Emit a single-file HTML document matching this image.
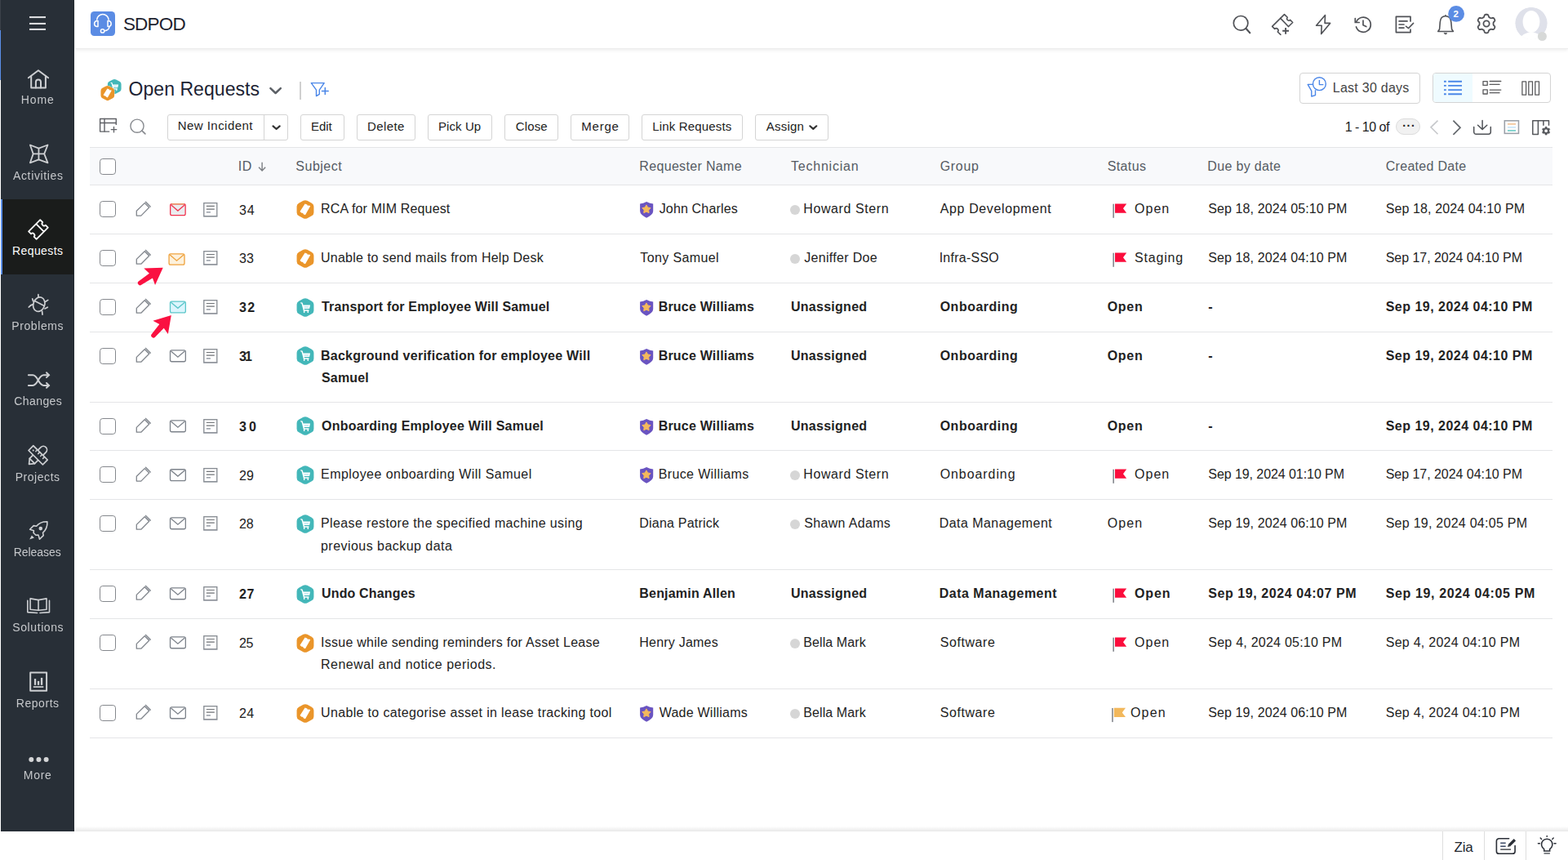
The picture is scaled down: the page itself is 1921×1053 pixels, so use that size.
<!DOCTYPE html>
<html lang="en"><head><meta charset="utf-8"><title>SDPOD - Open Requests</title>
<style>
html,body{margin:0;padding:0;}
body{width:1921px;height:1053px;overflow:hidden;background:#fff;position:relative;font-family:"Liberation Sans",sans-serif;color:#222;}
.a,.t,svg{position:absolute;}
.t{white-space:pre;line-height:20px;}
.g{will-change:opacity;}
svg{overflow:visible;}
.btn{position:absolute;box-sizing:border-box;border:1px solid #d4d4d4;border-radius:3px;background:#fff;height:32px;top:140px;}
.hl{position:absolute;left:110px;width:1792px;height:1px;background:#e4e5e7;}
.cb{position:absolute;left:122.2px;width:19.6px;height:19.6px;box-sizing:border-box;border:1.3px solid #85888d;border-radius:3.8px;background:#fff;}
.dot{position:absolute;left:968px;width:12px;height:12px;border-radius:50%;background:#d6d6d6;}
</style></head>
<body>
<div class="a" style="left:0;top:0;width:1px;height:37px;background:#3b4149"></div>
<div class="a" style="left:0;top:37px;width:1px;height:61px;background:#5b8fe8"></div>
<div class="a" id="side" style="left:1px;top:0;width:90px;height:1018px;background:#282f37;box-sizing:border-box;border-right:1px solid #222930"></div>
<div class="a" style="left:1px;top:244px;width:89px;height:92px;background:#1a1c1b"></div>
<div class="a" style="left:1px;top:244px;width:2px;height:92px;background:#5b8fe8"></div>
<div class="a" id="top" style="left:92px;top:0;width:1829px;height:59px;background:#fff;box-shadow:0 1px 0 #ededed,0 2px 5px rgba(0,0,0,0.09)"></div>
<div class="a" id="foot" style="left:0;top:1018px;width:1921px;height:35px;background:#fff"></div>
<div class="a" style="left:91px;top:1012px;width:1830px;height:6px;background:linear-gradient(to bottom,rgba(0,0,0,0),rgba(0,0,0,0.09))"></div>
<div class="a" style="left:1767px;top:1018px;width:1px;height:35px;background:#dedede"></div>
<div class="a" style="left:1818px;top:1018px;width:1px;height:35px;background:#dedede"></div>
<div class="a" style="left:1869px;top:1018px;width:1px;height:35px;background:#dedede"></div>
<div class="a" style="left:367.1px;top:100.1px;width:1.8px;height:21.7px;background:#d0d0d0"></div>
<div class="btn" style="left:205px;width:148px"></div>
<div class="a" style="left:323px;top:141px;width:1px;height:30px;background:#d4d4d4"></div>
<div class="btn" style="left:368px;width:54px"></div>
<div class="btn" style="left:437px;width:72px"></div>
<div class="btn" style="left:524px;width:79px"></div>
<div class="btn" style="left:618px;width:66px"></div>
<div class="btn" style="left:699px;width:72px"></div>
<div class="btn" style="left:786px;width:124px"></div>
<div class="btn" style="left:925px;width:90px"></div>
<div class="a" style="left:1592px;top:89px;width:148px;height:38px;box-sizing:border-box;border:1px solid #d4d4d4;border-radius:4px;background:#fff"></div>
<div class="a" style="left:1755px;top:89px;width:145px;height:37px;box-sizing:border-box;border:1px solid #d4d4d4;border-radius:4px;background:#fff;overflow:hidden"><div style="position:absolute;left:0;top:0;width:48px;height:35px;background:#effbff"></div></div>
<div class="a" style="left:1710px;top:145px;width:30px;height:20px;box-sizing:border-box;border:1px solid #dcdcdc;border-radius:10px;background:#f1f1f1"></div>
<div class="a" style="left:110px;top:180px;width:1792px;height:47px;box-sizing:border-box;border-top:1px solid #e4e5e7;border-bottom:1px solid #e4e5e7;background:#f8f9fb"></div>
<div class="cb" style="top:194px"></div>
<div class="hl" style="top:286px"></div>
<div class="cb" style="top:246.2px"></div>
<div class="dot" style="top:251px"></div>
<div class="hl" style="top:346px"></div>
<div class="cb" style="top:306.2px"></div>
<div class="dot" style="top:311px"></div>
<div class="hl" style="top:406px"></div>
<div class="cb" style="top:366.2px"></div>
<div class="hl" style="top:492px"></div>
<div class="cb" style="top:426.2px"></div>
<div class="hl" style="top:551px"></div>
<div class="cb" style="top:512.2px"></div>
<div class="hl" style="top:611px"></div>
<div class="cb" style="top:571.2px"></div>
<div class="dot" style="top:576px"></div>
<div class="hl" style="top:697px"></div>
<div class="cb" style="top:631.2px"></div>
<div class="dot" style="top:636px"></div>
<div class="hl" style="top:757px"></div>
<div class="cb" style="top:717.2px"></div>
<div class="hl" style="top:843px"></div>
<div class="cb" style="top:777.2px"></div>
<div class="dot" style="top:782px"></div>
<div class="hl" style="top:903px"></div>
<div class="cb" style="top:863.2px"></div>
<div class="dot" style="top:868px"></div>
<svg style="left:0;top:0" width="1921" height="1053" viewBox="0 0 1921 1053"><g fill="#dcdde0"><rect x="36" y="20" width="20" height="2.1"/><rect x="36" y="27.9" width="20" height="2.1"/><rect x="36" y="34.9" width="20" height="2.1"/></g>
<g fill="none" stroke="#cdcfd2" stroke-width="2" stroke-linecap="round" stroke-linejoin="round" stroke-linejoin="miter" stroke-linecap="butt"><path d="M34.9 95.3 L46.95 86.2 L59.1 95.3" stroke-linecap="round"/><path d="M38.2 93.3 V107.5 H55.9 V93.3"/><path d="M43.9 107.5 V100.6 A3.05 3.05 0 0 1 50 100.6 V107.5"/></g>
<g fill="none" stroke="#cdcfd2" stroke-width="1.8" stroke-linecap="round" stroke-linejoin="round" ><path d="M36.9 177.5 L47.45 181.6 L58.5 177.5 L54.2 188.4 L58.5 199.3 L47.45 195.4 L36.9 199.3 L40.7 188.4 Z"/><path d="M47.45 181.6 V195.4 M40.7 188.4 H54.2"/></g>
<path d="M-10.0 -6.75 H10.0 V-2.5 A2.5 2.5 0 0 0 10.0 2.5 V6.75 H-10.0 V2.5 A2.5 2.5 0 0 0 -10.0 -2.5 Z M2.9 -6.75 V6.75" transform="translate(46.95 281.0) rotate(-45)" fill="none" stroke="#ffffff" stroke-width="1.8" stroke-linejoin="round"/>
<g fill="none" stroke="#cdcfd2" stroke-width="1.7" stroke-linecap="round" stroke-linejoin="round" ><ellipse cx="47.8" cy="372.7" rx="6.9" ry="8.9" transform="rotate(20 47.9 372.7)"/><path d="M42.6 368.6 L54.2 374.4"/><path d="M47.0 364.0 L46.9 360.7"/><path d="M40.6 368.8 L39.7 365.8"/><path d="M40.4 372.6 Q37.5 373.4 35.3 376"/><path d="M55.5 369.5 L58.8 367.4"/><path d="M54.9 377.9 L58.3 376.2"/><path d="M51.6 381.0 L52 385.2"/></g>
<g fill="none" stroke="#cdcfd2" stroke-width="2" stroke-linecap="round" stroke-linejoin="round" ><path d="M34.9 459.2 H40 C47 459.2 46.6 471.9 53.6 471.9 H59.6"/><path d="M34.9 471.9 H40 C47 471.9 46.6 459.2 53.6 459.2 H59.6"/><path d="M57 456.3 L60 459.2 L57 462.1" stroke-linejoin="miter"/><path d="M57 469 L60 471.9 L57 474.8" stroke-linejoin="miter"/></g>
<g fill="none" stroke="#cdcfd2" stroke-width="1.7" stroke-linecap="round" stroke-linejoin="round" stroke-linejoin="miter"><g transform="translate(46.6 557.3) rotate(45)"><path d="M-4.4 -9.2 A4.4 4.4 0 0 1 4.4 -9.2 V10.2 L0 15.6 L-4.4 10.2 Z" transform="translate(0 0)"/><path d="M-4.4 10.2 H4.4"/></g><g transform="translate(46.6 557.3) rotate(-45)"><rect x="-4.1" y="-12.3" width="8.2" height="24.6" fill="#282f37"/><path d="M4.1 -5.2 H1.3 M4.1 -1.1 H1.3 M4.1 3.0 H1.3 M4.1 7.1 H1.3" stroke-width="1.5"/><circle cx="0" cy="-8.3" r="1.0" fill="#cdcfd2" stroke="none"/></g></g>
<g fill="none" stroke="#cdcfd2" stroke-width="1.6" stroke-linecap="round" stroke-linejoin="round" ><path d="M57.9 638.8 C52 638.6 47.5 640.8 44.6 644.3 L41.2 643.6 L36.6 648.2 L41.4 649.7 L41.1 652.5 L43.9 655.3 L47.0 655.1 L48.5 660.3 L53.2 655.6 L52.5 652.4 C56 649.3 58.2 645 57.9 638.8 Z"/><circle cx="49.8" cy="647.1" r="2.3" fill="#cdcfd2" stroke="none"/><path d="M38.9 655.4 L41.9 658.6 L36.2 660.5 Z" fill="#cdcfd2" stroke="none"/></g>
<g fill="none" stroke="#cdcfd2" stroke-width="1.6" stroke-linecap="round" stroke-linejoin="round" stroke-linejoin="miter" stroke-linecap="butt"><path d="M37.1 732.9 L47.05 734.6 L57.0 732.9 V746.2 L47.05 747.2 L37.1 746.2 Z"/><path d="M47.05 734.6 V747.2"/><path d="M33.8 735.4 V749.6 L45.6 750.5"/><path d="M60.5 735.4 V749.6 L49 750.5"/></g>
<g fill="none" stroke="#cdcfd2" stroke-width="2" stroke-linecap="round" stroke-linejoin="round" stroke-linejoin="miter"><rect x="37.2" y="823.4" width="19.9" height="22.4"/></g>
<g fill="#cdcfd2"><rect x="41.9" y="831.1" width="2.3" height="7.7"/><rect x="45.9" y="833.9" width="2.3" height="4.9"/><rect x="49.9" y="829.9" width="2.3" height="8.9"/><rect x="40.8" y="840.2" width="12.5" height="1.7"/></g>
<g fill="#d4d5d7"><circle cx="38.3" cy="929.9" r="3"/><circle cx="47.45" cy="929.9" r="3"/><circle cx="56.6" cy="929.9" r="3"/></g>
<rect x="111" y="14" width="30" height="30" rx="4.5" fill="#5b8ce4"/>
<g fill="none" stroke="#ffffff" stroke-width="1.5" stroke-linecap="round" stroke-linejoin="round" ><path d="M118.7 24.0 A7.25 7.25 0 0 1 133.1 24.0"/><path d="M120.0 25.5 V32.6 H118.6 A3.6 3.6 0 0 1 118.6 25.5 Z" stroke-linejoin="round"/><path d="M132.0 25.5 V32.6 H133.2 A3.6 3.6 0 0 0 133.2 25.5 Z"/><path d="M134.0 32.8 C133.6 35.4 131.2 37.4 128.0 37.8"/><circle cx="125.6" cy="37.9" r="2.2"/></g>
<g fill="none" stroke="#505257" stroke-width="1.7" stroke-linecap="round" stroke-linejoin="round" ><circle cx="1520.1" cy="28.3" r="8.8"/><path d="M1526.4 34.8 L1531.3 40.3" stroke-width="2.1"/></g>
<g fill="none" stroke="#505257" stroke-width="1.6" stroke-linecap="round" stroke-linejoin="round" stroke-linejoin="miter"><path d="M1578.5 32.5 L1583.7 27.5 L1580.6 24.4 A2.1 2.1 0 0 1 1577.3 21.3 L1573.5 17.6 L1558.6 32.4 L1561.6 35.4 A2.2 2.2 0 0 1 1565.3 39.0 L1568.9 42.4"/><path d="M1568.7 22.4 L1578.5 32.5" /><path d="M1571.2 37.8 H1579 M1575.1 33.9 V41.7" stroke-width="1.9" stroke-linecap="butt"/></g>
<g fill="none" stroke="#505257" stroke-width="1.6" stroke-linecap="round" stroke-linejoin="round" stroke-linejoin="miter"><path d="M1623.5 18.6 L1612.6 31.2 H1619.2 L1618.7 41.6 L1629.6 28.4 H1623.1 Z"/></g>
<g fill="none" stroke="#505257" stroke-width="1.7" stroke-linecap="round" stroke-linejoin="round" ><path d="M1661.6 27.2 A9.1 9.1 0 1 1 1661.5 32.9"/><path d="M1660.3 22.6 V27.5 H1665.2" stroke-linejoin="miter"/><path d="M1670.0 25.2 V30.8 L1673.8 32.6"/></g>
<g fill="none" stroke="#505257" stroke-width="1.7" stroke-linecap="round" stroke-linejoin="round" stroke-linejoin="miter" stroke-linecap="butt"><path d="M1728.0 26.0 V20.3 H1710.4 V39.6 H1728.0 V36.2"/><path d="M1714.1 25.9 H1724 M1714.1 30.0 H1720 M1714.1 34.1 H1720"/><path d="M1722.4 32.2 L1725.5 34.6 L1731.6 28.4" stroke-width="1.5"/></g>
<g fill="none" stroke="#505257" stroke-width="1.6" stroke-linecap="round" stroke-linejoin="round" ><path d="M1761.8 38.5 H1780.4 L1778.6 35.8 L1777.8 27 C1777.4 22.6 1774.8 19.8 1770.9 19.8 C1767 19.8 1764.6 22.6 1764.3 27 L1763.6 35.8 Z" stroke-linejoin="round"/><path d="M1769.4 40.4 H1772.6 A1.6 1.6 0 0 1 1769.4 40.4 Z" fill="#505257" stroke-width="0.6"/><circle cx="1771" cy="18.8" r="0.9" fill="#505257" stroke="none"/></g>
<circle cx="1784.1" cy="16.9" r="9.9" fill="#5b8ce4"/>
<path d="M1821.05 17.70 L1821.79 17.74 L1822.51 17.88 L1823.17 18.32 L1823.61 19.44 L1823.92 20.56 L1824.34 21.07 L1824.82 21.36 L1825.30 21.64 L1825.78 21.92 L1826.28 22.19 L1826.93 22.30 L1828.05 22.00 L1829.23 21.82 L1829.95 22.17 L1830.43 22.73 L1830.84 23.35 L1831.17 24.01 L1831.41 24.71 L1831.36 25.50 L1830.61 26.44 L1829.79 27.26 L1829.56 27.88 L1829.55 28.44 L1829.55 29.00 L1829.55 29.56 L1829.56 30.12 L1829.79 30.74 L1830.61 31.56 L1831.36 32.50 L1831.41 33.29 L1831.17 33.99 L1830.84 34.65 L1830.43 35.27 L1829.95 35.83 L1829.23 36.18 L1828.05 36.00 L1826.93 35.70 L1826.28 35.81 L1825.78 36.08 L1825.30 36.36 L1824.82 36.64 L1824.34 36.93 L1823.92 37.44 L1823.61 38.56 L1823.17 39.68 L1822.51 40.12 L1821.79 40.26 L1821.05 40.30 L1820.31 40.26 L1819.59 40.12 L1818.93 39.68 L1818.49 38.56 L1818.18 37.44 L1817.76 36.93 L1817.28 36.64 L1816.80 36.36 L1816.32 36.08 L1815.82 35.81 L1815.17 35.70 L1814.05 36.00 L1812.87 36.18 L1812.15 35.83 L1811.67 35.27 L1811.26 34.65 L1810.93 33.99 L1810.69 33.29 L1810.74 32.50 L1811.49 31.56 L1812.31 30.74 L1812.54 30.12 L1812.55 29.56 L1812.55 29.00 L1812.55 28.44 L1812.54 27.88 L1812.31 27.26 L1811.49 26.44 L1810.74 25.50 L1810.69 24.71 L1810.93 24.01 L1811.26 23.35 L1811.67 22.73 L1812.15 22.17 L1812.87 21.82 L1814.05 22.00 L1815.17 22.30 L1815.82 22.19 L1816.32 21.92 L1816.80 21.64 L1817.28 21.36 L1817.76 21.07 L1818.18 20.56 L1818.49 19.44 L1818.93 18.32 L1819.59 17.88 L1820.31 17.74 Z" fill="none" stroke="#505257" stroke-width="1.8" stroke-linejoin="round"/><circle cx="1821.05" cy="29.0" r="3.6" fill="none" stroke="#505257" stroke-width="1.8"/>
<defs><clipPath id="av"><circle cx="1876" cy="28.5" r="19.8"/></clipPath></defs>
<g clip-path="url(#av)"><circle cx="1876" cy="28.5" r="19.8" fill="#dfe1ea"/><ellipse cx="1876" cy="26.5" rx="10.4" ry="13.6" fill="#fff"/><ellipse cx="1876" cy="55" rx="16.5" ry="15.5" fill="#fff"/></g>
<circle cx="1889.4" cy="44.5" r="5.5" fill="#d7d9d8"/>
<path d="M138.19 97.49 Q140.20 96.44 142.21 97.49 L146.54 99.73 Q148.55 100.77 148.55 103.04 L148.55 108.96 Q148.55 111.23 146.54 112.27 L142.21 114.51 Q140.20 115.56 138.19 114.51 L133.86 112.27 Q131.85 111.23 131.85 108.96 L131.85 103.04 Q131.85 100.77 133.86 99.73 Z" fill="#43b7b9"/><path d="M135.68 101.32 L137.08 101.79 L138.95 108.81 H143.79" fill="none" stroke="#fff" stroke-width="1.17"/><path d="M137.55 103.50 H145.04 L144.26 107.25 H138.48 Z" fill="#fff"/><path d="M138.95 104.75 H143.48 V106.16 H139.26 Z" fill="#c5e9f1"/><path d="M139.11 108.81 V111.15 M142.85 108.81 V111.15" stroke="#fff" stroke-width="1.09"/>
<path d="M129.73 105.31 Q131.80 104.24 133.87 105.31 L138.34 107.63 Q140.41 108.71 140.41 111.04 L140.41 117.16 Q140.41 119.49 138.34 120.57 L133.87 122.89 Q131.80 123.96 129.73 122.89 L125.26 120.57 Q123.19 119.49 123.19 117.16 L123.19 111.04 Q123.19 108.71 125.26 107.63 Z" fill="#fff"/>
<path d="M129.79 105.59 Q131.80 104.54 133.81 105.59 L138.14 107.83 Q140.15 108.87 140.15 111.14 L140.15 117.06 Q140.15 119.33 138.14 120.37 L133.81 122.61 Q131.80 123.66 129.79 122.61 L125.46 120.37 Q123.45 119.33 123.45 117.06 L123.45 111.14 Q123.45 108.87 125.46 107.83 Z" fill="#ea952a"/><path d="M131.49 108.41 L133.59 109.26 Q133.83 110.82 135.39 110.20 L136.79 110.67 L131.80 119.56 L129.93 118.62 Q129.77 117.06 128.21 117.53 L126.57 116.13 Z" fill="#fff"/>
<path d="M331.4 108.1 L337.6 114.0 L343.8 108.1" fill="none" stroke="#5c6066" stroke-width="2.5" stroke-linecap="round" stroke-linejoin="round"/>
<g fill="none" stroke="#4a86e8" stroke-width="1.4" stroke-linecap="round" stroke-linejoin="round" stroke-linejoin="miter" stroke-linecap="butt"><path d="M381.3 101.6 H397.2 L391.3 110.2 V115.3 L387.5 117.6 V110.2 Z"/><path d="M394.4 111.5 H402.2 M398.3 107.4 V115.6" stroke-width="1.5"/></g>
<g fill="none" stroke="#5f6166" stroke-width="1.4" stroke-linecap="round" stroke-linejoin="round" stroke-linejoin="miter" stroke-linecap="butt"><path d="M142.3 152.4 V145.5 H122.6 V161.1 H133.7"/><path d="M128.0 145.5 V161.1 M122.6 150.5 H142.3"/><path d="M136.2 158.6 H142.8 M139.5 155.3 V161.9" stroke-width="1.3"/></g>
<g fill="none" stroke="#888b90" stroke-width="1.4" stroke-linecap="round" stroke-linejoin="round" ><circle cx="168.0" cy="154.2" r="8.1"/><path d="M174.0 160.1 L177.9 163.9" stroke-width="1.7"/></g>
<path d="M334.5 154.4 L338.6 158.0 L342.7 154.4" fill="none" stroke="#333" stroke-width="2.2" stroke-linecap="round" stroke-linejoin="round"/>
<path d="M992.3 154.3 L996.3 157.9 L1000.3 154.3" fill="none" stroke="#333" stroke-width="2.2" stroke-linecap="round" stroke-linejoin="round"/>
<g fill="none" stroke="#4a86e8" stroke-width="1.4" stroke-linecap="round" stroke-linejoin="round" stroke-linejoin="miter"><path d="M1609.0 103.4 H1602.2 L1606.8 111.3 V118.0 L1611.5 116.6 V110.3" stroke-linecap="butt"/><circle cx="1616.4" cy="102.7" r="7.9" fill="#fff"/><path d="M1616.4 98.0 V103.6 H1621.4" stroke-linecap="butt"/></g>
<path d="M1769 99.7 H1771.8 M1774.2 99.7 H1791" stroke="#4a86e8" stroke-width="1.9" fill="none"/>
<path d="M1769 104.9 H1771.8 M1774.2 104.9 H1791" stroke="#4a86e8" stroke-width="1.9" fill="none"/>
<path d="M1769 110.1 H1771.8 M1774.2 110.1 H1791" stroke="#4a86e8" stroke-width="1.9" fill="none"/>
<path d="M1769 115.2 H1771.8 M1774.2 115.2 H1791" stroke="#4a86e8" stroke-width="1.9" fill="none"/>
<g fill="none" stroke="#5a5a5c" stroke-width="1.3" stroke-linecap="round" stroke-linejoin="round" stroke-linejoin="miter" stroke-linecap="butt"><rect x="1817" y="99.6" width="5.2" height="4.8"/><rect x="1817" y="109.8" width="5.2" height="5.2"/><path d="M1825.2 99.5 H1838.8 M1825.2 103.4 H1837 M1825.2 110.1 H1838.8 M1825.2 113.7 H1837"/><rect x="1864.9" y="99.8" width="4.7" height="16.4"/><rect x="1872.8" y="99.8" width="4.7" height="16.4"/><rect x="1880.8" y="99.8" width="4.7" height="16.4"/></g>
<path d="M1761.5 147.7 L1753.0 155.8 L1761.5 164.2" fill="none" stroke="#c6c8cb" stroke-width="1.6"/>
<path d="M1780.4 147.7 L1789.0 156.3 L1780.4 164.9" fill="none" stroke="#63676c" stroke-width="1.7"/>
<g fill="none" stroke="#4f5257" stroke-width="1.5" stroke-linecap="round" stroke-linejoin="round" ><path d="M1805.7 155.5 V161.6 A2.6 2.6 0 0 0 1808.3 164.2 H1823.7 A2.6 2.6 0 0 0 1826.3 161.6 V155.5"/><path d="M1816.1 147.4 V158.3 M1810.5 153.2 L1816.1 158.5 L1821.8 153.2" stroke-linejoin="miter"/></g>
<rect x="1843.3" y="147.8" width="17.2" height="15.6" fill="#fcfcfd" stroke="#9a9fa7" stroke-width="1.5"/><path d="M1847 151.9 H1857" stroke="#f3bf8c" stroke-width="1.5"/><path d="M1847 155.9 H1857" stroke="#c3e4f8" stroke-width="1.5"/><path d="M1847 159.9 H1857" stroke="#62c8c1" stroke-width="1.5"/>
<g fill="none" stroke="#55575b" stroke-width="1.5" stroke-linecap="round" stroke-linejoin="round" stroke-linejoin="miter" stroke-linecap="butt"><path d="M1897.5 153.3 V147.7 H1877.8 V164.5 H1884.4 V147.7 M1890.9 147.7 V153.3"/></g>
<circle cx="1894.1" cy="160.2" r="6.3" fill="#fff"/>
<path d="M1894.10 155.20 L1894.43 155.22 L1894.75 155.28 L1895.04 155.47 L1895.24 155.95 L1895.38 156.43 L1895.57 156.65 L1895.78 156.79 L1896.00 156.91 L1896.21 157.04 L1896.44 157.16 L1896.72 157.21 L1897.21 157.09 L1897.73 157.02 L1898.04 157.18 L1898.25 157.43 L1898.43 157.70 L1898.58 157.99 L1898.68 158.30 L1898.67 158.65 L1898.35 159.06 L1898.00 159.42 L1897.90 159.70 L1897.90 159.95 L1897.90 160.20 L1897.90 160.45 L1897.90 160.70 L1898.00 160.98 L1898.35 161.34 L1898.67 161.75 L1898.68 162.10 L1898.58 162.41 L1898.43 162.70 L1898.25 162.97 L1898.04 163.22 L1897.73 163.38 L1897.21 163.31 L1896.72 163.19 L1896.44 163.24 L1896.21 163.36 L1896.00 163.49 L1895.78 163.61 L1895.57 163.75 L1895.38 163.97 L1895.24 164.45 L1895.04 164.93 L1894.75 165.12 L1894.43 165.18 L1894.10 165.20 L1893.77 165.18 L1893.45 165.12 L1893.16 164.93 L1892.96 164.45 L1892.82 163.97 L1892.63 163.75 L1892.42 163.61 L1892.20 163.49 L1891.99 163.36 L1891.76 163.24 L1891.48 163.19 L1890.99 163.31 L1890.47 163.38 L1890.16 163.22 L1889.95 162.97 L1889.77 162.70 L1889.62 162.41 L1889.52 162.10 L1889.53 161.75 L1889.85 161.34 L1890.20 160.98 L1890.30 160.70 L1890.30 160.45 L1890.30 160.20 L1890.30 159.95 L1890.30 159.70 L1890.20 159.42 L1889.85 159.06 L1889.53 158.65 L1889.52 158.30 L1889.62 157.99 L1889.77 157.70 L1889.95 157.43 L1890.16 157.18 L1890.47 157.02 L1890.99 157.09 L1891.48 157.21 L1891.76 157.16 L1891.99 157.04 L1892.20 156.91 L1892.42 156.79 L1892.63 156.65 L1892.82 156.43 L1892.96 155.95 L1893.16 155.47 L1893.45 155.28 L1893.77 155.22 Z" fill="#55575b" stroke="#55575b" stroke-width="0.5" stroke-linejoin="round"/><circle cx="1894.1" cy="160.2" r="2.0" fill="#fff" stroke="#55575b" stroke-width="0.3"/>
<path d="M321.1 198.7 V208.6 M317.0 204.7 L321.1 208.9 L325.2 204.7" fill="none" stroke="#7b7e83" stroke-width="1.4"/>
<g fill="none" stroke="#80858c" stroke-width="1.3" stroke-linecap="round" stroke-linejoin="round" stroke-linejoin="miter" stroke-linecap="butt"><path d="M167.3 264.1 V258.3 L177.2 248.6 L182.7 254.1 L172.8 264.1 Z"/><path d="M178.5 247.4 L184.1 253.0" stroke-width="1.7" stroke="#8a8f96"/></g>
<rect x="208.65" y="249.75" width="18.5" height="13.8" rx="1.9" fill="#ebecef" stroke="#f1344f" stroke-width="1.3"/><path d="M210.2 249.75 H225.7" stroke="#eaa36a" stroke-width="1.3" fill="none"/><path d="M209.7 250.95 L217.9 258.05 L226.2 250.95" fill="none" stroke="#f1344f" stroke-width="1.3"/>
<rect x="249.8" y="248.6" width="16.0" height="16.1" fill="#fff" stroke="#858a91" stroke-width="1.3"/><path d="M249.2 265.0 H266.4" stroke="#8d939b" stroke-width="0.9"/><path d="M252.8 252.4 H262.8 M252.8 256.1 H262.8" stroke="#6f7276" stroke-width="1.2"/><path d="M252.8 259.8 H257.9" stroke="#9aa0a9" stroke-width="1.6"/>
<path d="M371.49 245.86 Q374.00 244.56 376.51 245.86 L381.92 248.67 Q384.43 249.97 384.43 252.79 L384.43 260.21 Q384.43 263.03 381.92 264.33 L376.51 267.14 Q374.00 268.44 371.49 267.14 L366.08 264.33 Q363.57 263.03 363.57 260.21 L363.57 252.79 Q363.57 249.97 366.08 248.67 Z" fill="#ea952a"/><path d="M373.61 249.38 L376.24 250.46 Q376.54 252.41 378.49 251.62 L380.24 252.21 L374.00 263.32 L371.66 262.15 Q371.46 260.20 369.51 260.79 L367.47 259.04 Z" fill="#fff"/>
<path d="M792.1 247.0 Q796.2 249.3 800.2 249.4 V258.6 Q800.2 262.8 792.1 266.8 Q784.1 262.8 784.1 258.6 V249.4 Q788.0 249.3 792.1 247.0 Z" fill="#6a54c1"/><polygon points="791.90,250.90 793.60,253.95 797.04,254.63 794.66,257.20 795.07,260.67 791.90,259.20 788.73,260.67 789.14,257.20 786.76,254.63 790.20,253.95" fill="#f5b95c" stroke="#f5b95c" stroke-width="1" stroke-linejoin="round"/>
<rect x="1363.4" y="249.7" width="1.5" height="17.1" fill="#7d8087"/><path d="M1366.0 249.5 H1380.2 L1376.0 255.2 L1380.2 260.8 H1366.0 Z" fill="#fb0d3c"/>
<g fill="none" stroke="#80858c" stroke-width="1.3" stroke-linecap="round" stroke-linejoin="round" stroke-linejoin="miter" stroke-linecap="butt"><path d="M167.3 323.2 V317.4 L177.2 307.7 L182.7 313.2 L172.8 323.2 Z"/><path d="M178.5 306.5 L184.1 312.1" stroke-width="1.7" stroke="#8a8f96"/></g>
<rect x="207.05" y="310.90" width="18.95" height="13.25" rx="1.9" fill="#fdf1dc" stroke="#efa23c" stroke-width="1.3"/><path d="M208.1 312.10 L216.5 319.20 L225.0 312.10" fill="none" stroke="#efa23c" stroke-width="1.3"/>
<rect x="249.8" y="307.7" width="16.0" height="16.1" fill="#fff" stroke="#858a91" stroke-width="1.3"/><path d="M249.2 324.1 H266.4" stroke="#8d939b" stroke-width="0.9"/><path d="M252.8 311.5 H262.8 M252.8 315.2 H262.8" stroke="#6f7276" stroke-width="1.2"/><path d="M252.8 318.9 H257.9" stroke="#9aa0a9" stroke-width="1.6"/>
<path d="M371.49 305.86 Q374.00 304.56 376.51 305.86 L381.92 308.67 Q384.43 309.97 384.43 312.79 L384.43 320.21 Q384.43 323.03 381.92 324.33 L376.51 327.14 Q374.00 328.44 371.49 327.14 L366.08 324.33 Q363.57 323.03 363.57 320.21 L363.57 312.79 Q363.57 309.97 366.08 308.67 Z" fill="#ea952a"/><path d="M373.61 309.38 L376.24 310.45 Q376.54 312.40 378.49 311.62 L380.24 312.21 L374.00 323.32 L371.66 322.15 Q371.46 320.20 369.51 320.79 L367.47 319.04 Z" fill="#fff"/>
<rect x="1363.4" y="309.7" width="1.5" height="17.1" fill="#7d8087"/><path d="M1366.0 309.5 H1380.2 L1376.0 315.2 L1380.2 320.8 H1366.0 Z" fill="#fb0d3c"/>
<g fill="none" stroke="#80858c" stroke-width="1.3" stroke-linecap="round" stroke-linejoin="round" stroke-linejoin="miter" stroke-linecap="butt"><path d="M167.3 383.2 V377.4 L177.2 367.7 L182.7 373.2 L172.8 383.2 Z"/><path d="M178.5 366.5 L184.1 372.1" stroke-width="1.7" stroke="#8a8f96"/></g>
<rect x="208.50" y="369.05" width="18.85" height="13.8" rx="1.9" fill="#dcf5fd" stroke="#5ac6c9" stroke-width="1.3"/><path d="M209.5 370.25 L217.9 377.35 L226.3 370.25" fill="none" stroke="#5ac6c9" stroke-width="1.3"/>
<rect x="249.8" y="367.7" width="16.0" height="16.1" fill="#fff" stroke="#858a91" stroke-width="1.3"/><path d="M249.2 384.1 H266.4" stroke="#8d939b" stroke-width="0.9"/><path d="M252.8 371.5 H262.8 M252.8 375.2 H262.8" stroke="#6f7276" stroke-width="1.2"/><path d="M252.8 378.9 H257.9" stroke="#9aa0a9" stroke-width="1.6"/>
<path d="M371.49 365.86 Q374.00 364.56 376.51 365.86 L381.92 368.67 Q384.43 369.97 384.43 372.79 L384.43 380.21 Q384.43 383.03 381.92 384.33 L376.51 387.14 Q374.00 388.44 371.49 387.14 L366.08 384.33 Q363.57 383.03 363.57 380.21 L363.57 372.79 Q363.57 369.97 366.08 368.67 Z" fill="#43b7b9"/><path d="M368.35 370.65 L370.10 371.24 L372.44 380.01 H378.49" fill="none" stroke="#fff" stroke-width="1.46"/><path d="M370.69 373.38 H380.05 L379.07 378.06 H371.86 Z" fill="#fff"/><path d="M372.44 374.94 H378.10 V376.69 H372.83 Z" fill="#c5e9f1"/><path d="M372.63 380.01 V382.94 M377.31 380.01 V382.94" stroke="#fff" stroke-width="1.36"/>
<path d="M792.1 367.0 Q796.2 369.3 800.2 369.4 V378.6 Q800.2 382.8 792.1 386.8 Q784.1 382.8 784.1 378.6 V369.4 Q788.0 369.3 792.1 367.0 Z" fill="#6a54c1"/><polygon points="791.90,370.90 793.60,373.95 797.04,374.63 794.66,377.20 795.07,380.67 791.90,379.20 788.73,380.67 789.14,377.20 786.76,374.63 790.20,373.95" fill="#f5b95c" stroke="#f5b95c" stroke-width="1" stroke-linejoin="round"/>
<g fill="none" stroke="#80858c" stroke-width="1.3" stroke-linecap="round" stroke-linejoin="round" stroke-linejoin="miter" stroke-linecap="butt"><path d="M167.3 443.2 V437.4 L177.2 427.7 L182.7 433.2 L172.8 443.2 Z"/><path d="M178.5 426.5 L184.1 432.1" stroke-width="1.7" stroke="#8a8f96"/></g>
<rect x="208.50" y="428.85" width="18.85" height="13.9" rx="1.9" fill="#ffffff" stroke="#7c828a" stroke-width="1.3"/><path d="M209.5 430.05 L217.9 437.15 L226.3 430.05" fill="none" stroke="#7c828a" stroke-width="1.3"/>
<rect x="249.8" y="427.7" width="16.0" height="16.1" fill="#fff" stroke="#858a91" stroke-width="1.3"/><path d="M249.2 444.1 H266.4" stroke="#8d939b" stroke-width="0.9"/><path d="M252.8 431.5 H262.8 M252.8 435.2 H262.8" stroke="#6f7276" stroke-width="1.2"/><path d="M252.8 438.9 H257.9" stroke="#9aa0a9" stroke-width="1.6"/>
<path d="M371.49 424.86 Q374.00 423.56 376.51 424.86 L381.92 427.67 Q384.43 428.97 384.43 431.79 L384.43 439.21 Q384.43 442.03 381.92 443.33 L376.51 446.14 Q374.00 447.44 371.49 446.14 L366.08 443.33 Q363.57 442.03 363.57 439.21 L363.57 431.79 Q363.57 428.97 366.08 427.67 Z" fill="#43b7b9"/><path d="M368.35 429.65 L370.10 430.24 L372.44 439.01 H378.49" fill="none" stroke="#fff" stroke-width="1.46"/><path d="M370.69 432.38 H380.05 L379.07 437.06 H371.86 Z" fill="#fff"/><path d="M372.44 433.94 H378.10 V435.69 H372.83 Z" fill="#c5e9f1"/><path d="M372.63 439.01 V441.94 M377.31 439.01 V441.94" stroke="#fff" stroke-width="1.36"/>
<path d="M792.1 427.0 Q796.2 429.3 800.2 429.4 V438.6 Q800.2 442.8 792.1 446.8 Q784.1 442.8 784.1 438.6 V429.4 Q788.0 429.3 792.1 427.0 Z" fill="#6a54c1"/><polygon points="791.90,430.90 793.60,433.95 797.04,434.63 794.66,437.20 795.07,440.67 791.90,439.20 788.73,440.67 789.14,437.20 786.76,434.63 790.20,433.95" fill="#f5b95c" stroke="#f5b95c" stroke-width="1" stroke-linejoin="round"/>
<g fill="none" stroke="#80858c" stroke-width="1.3" stroke-linecap="round" stroke-linejoin="round" stroke-linejoin="miter" stroke-linecap="butt"><path d="M167.3 529.2 V523.4 L177.2 513.7 L182.7 519.2 L172.8 529.2 Z"/><path d="M178.5 512.5 L184.1 518.1" stroke-width="1.7" stroke="#8a8f96"/></g>
<rect x="208.50" y="514.85" width="18.85" height="13.9" rx="1.9" fill="#ffffff" stroke="#7c828a" stroke-width="1.3"/><path d="M209.5 516.05 L217.9 523.15 L226.3 516.05" fill="none" stroke="#7c828a" stroke-width="1.3"/>
<rect x="249.8" y="513.7" width="16.0" height="16.1" fill="#fff" stroke="#858a91" stroke-width="1.3"/><path d="M249.2 530.1 H266.4" stroke="#8d939b" stroke-width="0.9"/><path d="M252.8 517.5 H262.8 M252.8 521.2 H262.8" stroke="#6f7276" stroke-width="1.2"/><path d="M252.8 524.9 H257.9" stroke="#9aa0a9" stroke-width="1.6"/>
<path d="M371.49 510.86 Q374.00 509.56 376.51 510.86 L381.92 513.67 Q384.43 514.97 384.43 517.79 L384.43 525.21 Q384.43 528.03 381.92 529.33 L376.51 532.14 Q374.00 533.44 371.49 532.14 L366.08 529.33 Q363.57 528.03 363.57 525.21 L363.57 517.79 Q363.57 514.97 366.08 513.67 Z" fill="#43b7b9"/><path d="M368.35 515.65 L370.10 516.24 L372.44 525.01 H378.49" fill="none" stroke="#fff" stroke-width="1.46"/><path d="M370.69 518.38 H380.05 L379.07 523.06 H371.86 Z" fill="#fff"/><path d="M372.44 519.94 H378.10 V521.70 H372.83 Z" fill="#c5e9f1"/><path d="M372.63 525.01 V527.93 M377.31 525.01 V527.93" stroke="#fff" stroke-width="1.36"/>
<path d="M792.1 513.0 Q796.2 515.3 800.2 515.4 V524.6 Q800.2 528.8 792.1 532.8 Q784.1 528.8 784.1 524.6 V515.4 Q788.0 515.3 792.1 513.0 Z" fill="#6a54c1"/><polygon points="791.90,516.90 793.60,519.95 797.04,520.63 794.66,523.20 795.07,526.67 791.90,525.20 788.73,526.67 789.14,523.20 786.76,520.63 790.20,519.95" fill="#f5b95c" stroke="#f5b95c" stroke-width="1" stroke-linejoin="round"/>
<g fill="none" stroke="#80858c" stroke-width="1.3" stroke-linecap="round" stroke-linejoin="round" stroke-linejoin="miter" stroke-linecap="butt"><path d="M167.3 589.1 V583.3 L177.2 573.6 L182.7 579.1 L172.8 589.1 Z"/><path d="M178.5 572.4 L184.1 578.0" stroke-width="1.7" stroke="#8a8f96"/></g>
<rect x="208.50" y="574.75" width="18.85" height="13.9" rx="1.9" fill="#ffffff" stroke="#7c828a" stroke-width="1.3"/><path d="M209.5 575.95 L217.9 583.05 L226.3 575.95" fill="none" stroke="#7c828a" stroke-width="1.3"/>
<rect x="249.8" y="573.6" width="16.0" height="16.1" fill="#fff" stroke="#858a91" stroke-width="1.3"/><path d="M249.2 590.0 H266.4" stroke="#8d939b" stroke-width="0.9"/><path d="M252.8 577.4 H262.8 M252.8 581.1 H262.8" stroke="#6f7276" stroke-width="1.2"/><path d="M252.8 584.8 H257.9" stroke="#9aa0a9" stroke-width="1.6"/>
<path d="M371.49 570.86 Q374.00 569.56 376.51 570.86 L381.92 573.67 Q384.43 574.97 384.43 577.79 L384.43 585.21 Q384.43 588.03 381.92 589.33 L376.51 592.14 Q374.00 593.44 371.49 592.14 L366.08 589.33 Q363.57 588.03 363.57 585.21 L363.57 577.79 Q363.57 574.97 366.08 573.67 Z" fill="#43b7b9"/><path d="M368.35 575.65 L370.10 576.24 L372.44 585.01 H378.49" fill="none" stroke="#fff" stroke-width="1.46"/><path d="M370.69 578.38 H380.05 L379.07 583.06 H371.86 Z" fill="#fff"/><path d="M372.44 579.94 H378.10 V581.70 H372.83 Z" fill="#c5e9f1"/><path d="M372.63 585.01 V587.93 M377.31 585.01 V587.93" stroke="#fff" stroke-width="1.36"/>
<path d="M792.1 572.0 Q796.2 574.3 800.2 574.4 V583.6 Q800.2 587.8 792.1 591.8 Q784.1 587.8 784.1 583.6 V574.4 Q788.0 574.3 792.1 572.0 Z" fill="#6a54c1"/><polygon points="791.90,575.90 793.60,578.95 797.04,579.63 794.66,582.20 795.07,585.67 791.90,584.20 788.73,585.67 789.14,582.20 786.76,579.63 790.20,578.95" fill="#f5b95c" stroke="#f5b95c" stroke-width="1" stroke-linejoin="round"/>
<rect x="1363.4" y="574.7" width="1.5" height="17.1" fill="#7d8087"/><path d="M1366.0 574.5 H1380.2 L1376.0 580.2 L1380.2 585.8 H1366.0 Z" fill="#fb0d3c"/>
<g fill="none" stroke="#80858c" stroke-width="1.3" stroke-linecap="round" stroke-linejoin="round" stroke-linejoin="miter" stroke-linecap="butt"><path d="M167.3 648.2 V642.4 L177.2 632.7 L182.7 638.2 L172.8 648.2 Z"/><path d="M178.5 631.5 L184.1 637.1" stroke-width="1.7" stroke="#8a8f96"/></g>
<rect x="208.50" y="633.85" width="18.85" height="13.9" rx="1.9" fill="#ffffff" stroke="#7c828a" stroke-width="1.3"/><path d="M209.5 635.05 L217.9 642.15 L226.3 635.05" fill="none" stroke="#7c828a" stroke-width="1.3"/>
<rect x="249.8" y="632.7" width="16.0" height="16.1" fill="#fff" stroke="#858a91" stroke-width="1.3"/><path d="M249.2 649.1 H266.4" stroke="#8d939b" stroke-width="0.9"/><path d="M252.8 636.5 H262.8 M252.8 640.2 H262.8" stroke="#6f7276" stroke-width="1.2"/><path d="M252.8 643.9 H257.9" stroke="#9aa0a9" stroke-width="1.6"/>
<path d="M371.49 630.86 Q374.00 629.56 376.51 630.86 L381.92 633.67 Q384.43 634.97 384.43 637.79 L384.43 645.21 Q384.43 648.03 381.92 649.33 L376.51 652.14 Q374.00 653.44 371.49 652.14 L366.08 649.33 Q363.57 648.03 363.57 645.21 L363.57 637.79 Q363.57 634.97 366.08 633.67 Z" fill="#43b7b9"/><path d="M368.35 635.65 L370.10 636.24 L372.44 645.01 H378.49" fill="none" stroke="#fff" stroke-width="1.46"/><path d="M370.69 638.38 H380.05 L379.07 643.06 H371.86 Z" fill="#fff"/><path d="M372.44 639.94 H378.10 V641.70 H372.83 Z" fill="#c5e9f1"/><path d="M372.63 645.01 V647.93 M377.31 645.01 V647.93" stroke="#fff" stroke-width="1.36"/>
<g fill="none" stroke="#80858c" stroke-width="1.3" stroke-linecap="round" stroke-linejoin="round" stroke-linejoin="miter" stroke-linecap="butt"><path d="M167.3 734.2 V728.4 L177.2 718.7 L182.7 724.2 L172.8 734.2 Z"/><path d="M178.5 717.5 L184.1 723.1" stroke-width="1.7" stroke="#8a8f96"/></g>
<rect x="208.50" y="719.85" width="18.85" height="13.9" rx="1.9" fill="#ffffff" stroke="#7c828a" stroke-width="1.3"/><path d="M209.5 721.05 L217.9 728.15 L226.3 721.05" fill="none" stroke="#7c828a" stroke-width="1.3"/>
<rect x="249.8" y="718.7" width="16.0" height="16.1" fill="#fff" stroke="#858a91" stroke-width="1.3"/><path d="M249.2 735.1 H266.4" stroke="#8d939b" stroke-width="0.9"/><path d="M252.8 722.5 H262.8 M252.8 726.2 H262.8" stroke="#6f7276" stroke-width="1.2"/><path d="M252.8 729.9 H257.9" stroke="#9aa0a9" stroke-width="1.6"/>
<path d="M371.49 716.86 Q374.00 715.56 376.51 716.86 L381.92 719.67 Q384.43 720.97 384.43 723.79 L384.43 731.21 Q384.43 734.03 381.92 735.33 L376.51 738.14 Q374.00 739.44 371.49 738.14 L366.08 735.33 Q363.57 734.03 363.57 731.21 L363.57 723.79 Q363.57 720.97 366.08 719.67 Z" fill="#43b7b9"/><path d="M368.35 721.65 L370.10 722.24 L372.44 731.01 H378.49" fill="none" stroke="#fff" stroke-width="1.46"/><path d="M370.69 724.38 H380.05 L379.07 729.06 H371.86 Z" fill="#fff"/><path d="M372.44 725.94 H378.10 V727.70 H372.83 Z" fill="#c5e9f1"/><path d="M372.63 731.01 V733.93 M377.31 731.01 V733.93" stroke="#fff" stroke-width="1.36"/>
<rect x="1363.4" y="720.7" width="1.5" height="17.1" fill="#7d8087"/><path d="M1366.0 720.5 H1380.2 L1376.0 726.2 L1380.2 731.8 H1366.0 Z" fill="#fb0d3c"/>
<g fill="none" stroke="#80858c" stroke-width="1.3" stroke-linecap="round" stroke-linejoin="round" stroke-linejoin="miter" stroke-linecap="butt"><path d="M167.3 794.2 V788.4 L177.2 778.7 L182.7 784.2 L172.8 794.2 Z"/><path d="M178.5 777.5 L184.1 783.1" stroke-width="1.7" stroke="#8a8f96"/></g>
<rect x="208.50" y="779.85" width="18.85" height="13.9" rx="1.9" fill="#ffffff" stroke="#7c828a" stroke-width="1.3"/><path d="M209.5 781.05 L217.9 788.15 L226.3 781.05" fill="none" stroke="#7c828a" stroke-width="1.3"/>
<rect x="249.8" y="778.7" width="16.0" height="16.1" fill="#fff" stroke="#858a91" stroke-width="1.3"/><path d="M249.2 795.1 H266.4" stroke="#8d939b" stroke-width="0.9"/><path d="M252.8 782.5 H262.8 M252.8 786.2 H262.8" stroke="#6f7276" stroke-width="1.2"/><path d="M252.8 789.9 H257.9" stroke="#9aa0a9" stroke-width="1.6"/>
<path d="M371.49 776.86 Q374.00 775.56 376.51 776.86 L381.92 779.67 Q384.43 780.97 384.43 783.79 L384.43 791.21 Q384.43 794.03 381.92 795.33 L376.51 798.14 Q374.00 799.44 371.49 798.14 L366.08 795.33 Q363.57 794.03 363.57 791.21 L363.57 783.79 Q363.57 780.97 366.08 779.67 Z" fill="#ea952a"/><path d="M373.61 780.38 L376.24 781.46 Q376.54 783.40 378.49 782.62 L380.24 783.21 L374.00 794.33 L371.66 793.15 Q371.46 791.21 369.51 791.79 L367.47 790.03 Z" fill="#fff"/>
<rect x="1363.4" y="780.7" width="1.5" height="17.1" fill="#7d8087"/><path d="M1366.0 780.5 H1380.2 L1376.0 786.2 L1380.2 791.8 H1366.0 Z" fill="#fb0d3c"/>
<g fill="none" stroke="#80858c" stroke-width="1.3" stroke-linecap="round" stroke-linejoin="round" stroke-linejoin="miter" stroke-linecap="butt"><path d="M167.3 880.2 V874.4 L177.2 864.7 L182.7 870.2 L172.8 880.2 Z"/><path d="M178.5 863.5 L184.1 869.1" stroke-width="1.7" stroke="#8a8f96"/></g>
<rect x="208.50" y="865.85" width="18.85" height="13.9" rx="1.9" fill="#ffffff" stroke="#7c828a" stroke-width="1.3"/><path d="M209.5 867.05 L217.9 874.15 L226.3 867.05" fill="none" stroke="#7c828a" stroke-width="1.3"/>
<rect x="249.8" y="864.7" width="16.0" height="16.1" fill="#fff" stroke="#858a91" stroke-width="1.3"/><path d="M249.2 881.1 H266.4" stroke="#8d939b" stroke-width="0.9"/><path d="M252.8 868.5 H262.8 M252.8 872.2 H262.8" stroke="#6f7276" stroke-width="1.2"/><path d="M252.8 875.9 H257.9" stroke="#9aa0a9" stroke-width="1.6"/>
<path d="M371.49 862.86 Q374.00 861.56 376.51 862.86 L381.92 865.67 Q384.43 866.97 384.43 869.79 L384.43 877.21 Q384.43 880.03 381.92 881.33 L376.51 884.14 Q374.00 885.44 371.49 884.14 L366.08 881.33 Q363.57 880.03 363.57 877.21 L363.57 869.79 Q363.57 866.97 366.08 865.67 Z" fill="#ea952a"/><path d="M373.61 866.38 L376.24 867.46 Q376.54 869.40 378.49 868.62 L380.24 869.21 L374.00 880.33 L371.66 879.15 Q371.46 877.21 369.51 877.79 L367.47 876.03 Z" fill="#fff"/>
<path d="M792.1 864.0 Q796.2 866.3 800.2 866.4 V875.6 Q800.2 879.8 792.1 883.8 Q784.1 879.8 784.1 875.6 V866.4 Q788.0 866.3 792.1 864.0 Z" fill="#6a54c1"/><polygon points="791.90,867.90 793.60,870.95 797.04,871.63 794.66,874.20 795.07,877.67 791.90,876.20 788.73,877.67 789.14,874.20 786.76,871.63 790.20,870.95" fill="#f5b95c" stroke="#f5b95c" stroke-width="1" stroke-linejoin="round"/>
<rect x="1362.2" y="867.0" width="1.5" height="17.1" fill="#7d8087"/><path d="M1364.8 866.8 H1379.0 L1374.8 872.5 L1379.0 878.1 H1364.8 Z" fill="#f2b85c"/>
<path d="M199.70 327.70 L176.32 328.58 L182.91 334.63 L170.06 344.21 A2.8 2.8 0 0 0 173.19 348.86 L186.93 340.61 L190.03 349.00 Z" fill="#fa1141"/>
<path d="M209.80 386.00 L187.42 392.80 L195.33 396.98 L185.85 408.95 A2.8 2.8 0 0 0 190.05 412.65 L200.73 401.74 L205.87 409.06 Z" fill="#fa1141"/>
<g fill="none" stroke="#2b2f37" stroke-width="1.6" stroke-linecap="round" stroke-linejoin="round" ><path d="M1848.6 1026.7 H1836.5 A3.1 3.1 0 0 0 1833.4 1029.8 V1042.2 A3.1 3.1 0 0 0 1836.5 1045.3 H1853 A3.1 3.1 0 0 0 1856.1 1042.2 V1035.6"/><path d="M1838.2 1032.2 H1844.7 M1838.2 1036.3 H1844.7" stroke="#3d4a66" stroke-linecap="butt"/><path d="M1838.2 1040.1 H1851" stroke="#55575b" stroke-linecap="butt"/><path d="M1849.3 1034.7 L1855.9 1028.3" stroke-width="3.3" stroke-linecap="butt"/><path d="M1847.4 1036.5 L1848.3 1033.7 L1850.3 1035.7 Z" stroke-width="0.5" fill="#2b2f37"/></g>
<g fill="none" stroke="#2b2f37" stroke-width="1.5" stroke-linecap="round" stroke-linejoin="round" ><path d="M1891.7 1041.9 V1039.6 A6.7 6.7 0 1 1 1898.7 1039.6 V1041.9 Z" stroke-linejoin="miter"/><path d="M1891.5 1044.9 H1898.9" stroke="#6d7075" stroke-width="1.7" stroke-linecap="butt"/><path d="M1895.2 1023.4 V1024.4 M1887.2 1025.9 L1888.6 1027.4 M1903.2 1025.9 L1901.8 1027.4 M1884.4 1032.7 H1886.4 M1904.0 1032.7 H1906.1" stroke-width="1.4"/></g></svg>
<span class="t g" style="left:25.80px;top:112px;font-size:14px;color:#c6c8cb;letter-spacing:0.914px;">Home</span>
<span class="t g" style="left:16.00px;top:205px;font-size:14px;color:#c6c8cb;letter-spacing:0.641px;">Activities</span>
<span class="t" style="left:15.00px;top:297px;font-size:14px;color:#fff;letter-spacing:0.408px;">Requests</span>
<span class="t g" style="left:14.30px;top:389px;font-size:14px;color:#c6c8cb;letter-spacing:0.581px;">Problems</span>
<span class="t g" style="left:17.30px;top:481px;font-size:14px;color:#c6c8cb;letter-spacing:0.410px;">Changes</span>
<span class="t g" style="left:18.70px;top:574px;font-size:14px;color:#c6c8cb;letter-spacing:0.547px;">Projects</span>
<span class="t g" style="left:16.70px;top:666px;font-size:14px;color:#c6c8cb;letter-spacing:-0.052px;">Releases</span>
<span class="t g" style="left:15.30px;top:758px;font-size:14px;color:#c6c8cb;letter-spacing:0.588px;">Solutions</span>
<span class="t g" style="left:19.80px;top:851px;font-size:14px;color:#c6c8cb;letter-spacing:0.547px;">Reports</span>
<span class="t g" style="left:28.85px;top:939px;font-size:14px;color:#c6c8cb;letter-spacing:0.680px;">More</span>
<span class="t" style="left:150.90px;top:20px;font-size:22.5px;color:#1f2430;letter-spacing:-0.816px;">SDPOD</span>
<span class="t" style="left:157.50px;top:99px;font-size:23px;color:#1c2333;letter-spacing:0.057px;">Open Requests</span>
<span class="t" style="left:217.70px;top:144px;font-size:15px;letter-spacing:0.460px;">New Incident</span>
<span class="t" style="left:381.00px;top:145px;font-size:15px;letter-spacing:-0.060px;">Edit</span>
<span class="t" style="left:450.00px;top:145px;font-size:15px;letter-spacing:0.397px;">Delete</span>
<span class="t" style="left:537.00px;top:145px;font-size:15px;letter-spacing:0.077px;">Pick Up</span>
<span class="t" style="left:631.80px;top:145px;font-size:15px;letter-spacing:0.123px;">Close</span>
<span class="t" style="left:712.30px;top:145px;font-size:15px;letter-spacing:0.756px;">Merge</span>
<span class="t" style="left:799.30px;top:145px;font-size:15px;letter-spacing:0.162px;">Link Requests</span>
<span class="t" style="left:938.80px;top:145px;font-size:15px;letter-spacing:0.204px;">Assign</span>
<span class="t" style="left:1632.80px;top:98px;font-size:16px;color:#444;letter-spacing:0.252px;">Last 30 days</span>
<span class="t" style="left:1647.70px;top:146px;font-size:16px;letter-spacing:-0.495px;">1 - 10 of</span>
<span class="t" style="left:291.70px;top:194px;font-size:16px;color:#555b63;letter-spacing:0.555px;">ID</span>
<span class="t" style="left:362.30px;top:194px;font-size:16px;color:#555b63;letter-spacing:0.513px;">Subject</span>
<span class="t" style="left:783.30px;top:194px;font-size:16px;color:#555b63;letter-spacing:0.335px;">Requester Name</span>
<span class="t" style="left:969.00px;top:194px;font-size:16px;color:#555b63;letter-spacing:0.777px;">Technician</span>
<span class="t" style="left:1151.70px;top:194px;font-size:16px;color:#555b63;letter-spacing:0.682px;">Group</span>
<span class="t" style="left:1356.70px;top:194px;font-size:16px;color:#555b63;letter-spacing:0.388px;">Status</span>
<span class="t" style="left:1479.30px;top:194px;font-size:16px;color:#555b63;letter-spacing:0.332px;">Due by date</span>
<span class="t" style="left:1697.70px;top:194px;font-size:16px;color:#555b63;letter-spacing:0.303px;">Created Date</span>
<span class="t" style="left:292.90px;top:248px;font-size:16px;letter-spacing:0.952px;">34</span>
<span class="t" style="left:393.00px;top:246px;font-size:16px;letter-spacing:0.148px;">RCA for MIM Request</span>
<span class="t" style="left:807.70px;top:246px;font-size:16px;letter-spacing:0.157px;">John Charles</span>
<span class="t" style="left:984.30px;top:246px;font-size:16px;letter-spacing:0.589px;">Howard Stern</span>
<span class="t" style="left:1151.70px;top:246px;font-size:16px;letter-spacing:0.633px;">App Development</span>
<span class="t" style="left:1390.00px;top:246px;font-size:16px;letter-spacing:1.019px;">Open</span>
<span class="t" style="left:1480.30px;top:246px;font-size:16px;letter-spacing:0.095px;">Sep 18, 2024 05:10 PM</span>
<span class="t" style="left:1697.70px;top:246px;font-size:16px;letter-spacing:0.110px;">Sep 18, 2024 04:10 PM</span>
<span class="t" style="left:292.90px;top:307px;font-size:16px;letter-spacing:0.302px;">33</span>
<span class="t" style="left:393.00px;top:306px;font-size:16px;letter-spacing:0.253px;">Unable to send mails from Help Desk</span>
<span class="t" style="left:784.30px;top:306px;font-size:16px;letter-spacing:0.376px;">Tony Samuel</span>
<span class="t" style="left:985.30px;top:306px;font-size:16px;letter-spacing:0.302px;">Jeniffer Doe</span>
<span class="t" style="left:1150.70px;top:306px;font-size:16px;letter-spacing:0.239px;">Infra-SSO</span>
<span class="t" style="left:1390.00px;top:306px;font-size:16px;letter-spacing:0.822px;">Staging</span>
<span class="t" style="left:1480.30px;top:306px;font-size:16px;letter-spacing:0.095px;">Sep 18, 2024 04:10 PM</span>
<span class="t" style="left:1697.70px;top:306px;font-size:16px;letter-spacing:-0.040px;">Sep 17, 2024 04:10 PM</span>
<span class="t" style="left:292.90px;top:367px;font-size:16px;font-weight:700;letter-spacing:1.402px;">32</span>
<span class="t" style="left:394.00px;top:366px;font-size:16px;font-weight:700;letter-spacing:0.165px;">Transport for Employee Will Samuel</span>
<span class="t" style="left:806.70px;top:366px;font-size:16px;font-weight:700;letter-spacing:0.203px;">Bruce Williams</span>
<span class="t" style="left:969.00px;top:366px;font-size:16px;font-weight:700;letter-spacing:0.265px;">Unassigned</span>
<span class="t" style="left:1151.70px;top:366px;font-size:16px;font-weight:700;letter-spacing:0.491px;">Onboarding</span>
<span class="t" style="left:1356.70px;top:366px;font-size:16px;font-weight:700;letter-spacing:0.728px;">Open</span>
<span class="t" style="left:1480.30px;top:366px;font-size:16px;font-weight:700;">-</span>
<span class="t" style="left:1697.70px;top:366px;font-size:16px;font-weight:700;letter-spacing:0.487px;">Sep 19, 2024 04:10 PM</span>
<span class="t" style="left:292.90px;top:427px;font-size:16px;font-weight:700;letter-spacing:-1.898px;">31</span>
<span class="t" style="left:393.00px;top:426px;font-size:16px;font-weight:700;letter-spacing:0.256px;">Background verification for employee Will</span>
<span class="t" style="left:394.00px;top:453px;font-size:16px;font-weight:700;letter-spacing:0.166px;">Samuel</span>
<span class="t" style="left:806.70px;top:426px;font-size:16px;font-weight:700;letter-spacing:0.203px;">Bruce Williams</span>
<span class="t" style="left:969.00px;top:426px;font-size:16px;font-weight:700;letter-spacing:0.265px;">Unassigned</span>
<span class="t" style="left:1151.70px;top:426px;font-size:16px;font-weight:700;letter-spacing:0.491px;">Onboarding</span>
<span class="t" style="left:1356.70px;top:426px;font-size:16px;font-weight:700;letter-spacing:0.728px;">Open</span>
<span class="t" style="left:1480.30px;top:426px;font-size:16px;font-weight:700;">-</span>
<span class="t" style="left:1697.70px;top:426px;font-size:16px;font-weight:700;letter-spacing:0.487px;">Sep 19, 2024 04:10 PM</span>
<span class="t" style="left:292.90px;top:513px;font-size:16px;font-weight:700;letter-spacing:3.102px;">30</span>
<span class="t" style="left:394.00px;top:512px;font-size:16px;font-weight:700;letter-spacing:0.232px;">Onboarding Employee Will Samuel</span>
<span class="t" style="left:806.70px;top:512px;font-size:16px;font-weight:700;letter-spacing:0.203px;">Bruce Williams</span>
<span class="t" style="left:969.00px;top:512px;font-size:16px;font-weight:700;letter-spacing:0.265px;">Unassigned</span>
<span class="t" style="left:1151.70px;top:512px;font-size:16px;font-weight:700;letter-spacing:0.491px;">Onboarding</span>
<span class="t" style="left:1356.70px;top:512px;font-size:16px;font-weight:700;letter-spacing:0.728px;">Open</span>
<span class="t" style="left:1480.30px;top:512px;font-size:16px;font-weight:700;">-</span>
<span class="t" style="left:1697.70px;top:512px;font-size:16px;font-weight:700;letter-spacing:0.487px;">Sep 19, 2024 04:10 PM</span>
<span class="t" style="left:292.90px;top:573px;font-size:16px;letter-spacing:0.302px;">29</span>
<span class="t" style="left:393.00px;top:571px;font-size:16px;letter-spacing:0.456px;">Employee onboarding Will Samuel</span>
<span class="t" style="left:806.70px;top:571px;font-size:16px;letter-spacing:0.370px;">Bruce Williams</span>
<span class="t" style="left:984.30px;top:571px;font-size:16px;letter-spacing:0.589px;">Howard Stern</span>
<span class="t" style="left:1151.70px;top:571px;font-size:16px;letter-spacing:0.920px;">Onboarding</span>
<span class="t" style="left:1390.00px;top:571px;font-size:16px;letter-spacing:1.019px;">Open</span>
<span class="t" style="left:1480.30px;top:571px;font-size:16px;letter-spacing:-0.070px;">Sep 19, 2024 01:10 PM</span>
<span class="t" style="left:1697.70px;top:571px;font-size:16px;letter-spacing:-0.040px;">Sep 17, 2024 04:10 PM</span>
<span class="t" style="left:292.90px;top:632px;font-size:16px;letter-spacing:-0.098px;">28</span>
<span class="t" style="left:393.00px;top:631px;font-size:16px;letter-spacing:0.379px;">Please restore the specified machine using</span>
<span class="t" style="left:393.00px;top:659px;font-size:16px;letter-spacing:0.463px;">previous backup data</span>
<span class="t" style="left:783.30px;top:631px;font-size:16px;letter-spacing:0.213px;">Diana Patrick</span>
<span class="t" style="left:985.30px;top:631px;font-size:16px;letter-spacing:0.324px;">Shawn Adams</span>
<span class="t" style="left:1150.70px;top:631px;font-size:16px;letter-spacing:0.458px;">Data Management</span>
<span class="t" style="left:1356.70px;top:631px;font-size:16px;letter-spacing:1.119px;">Open</span>
<span class="t" style="left:1480.30px;top:631px;font-size:16px;letter-spacing:0.095px;">Sep 19, 2024 06:10 PM</span>
<span class="t" style="left:1697.70px;top:631px;font-size:16px;letter-spacing:0.260px;">Sep 19, 2024 04:05 PM</span>
<span class="t" style="left:292.90px;top:718px;font-size:16px;font-weight:700;letter-spacing:0.602px;">27</span>
<span class="t" style="left:394.00px;top:717px;font-size:16px;font-weight:700;letter-spacing:0.155px;">Undo Changes</span>
<span class="t" style="left:783.30px;top:717px;font-size:16px;font-weight:700;letter-spacing:0.200px;">Benjamin Allen</span>
<span class="t" style="left:969.00px;top:717px;font-size:16px;font-weight:700;letter-spacing:0.265px;">Unassigned</span>
<span class="t" style="left:1150.70px;top:717px;font-size:16px;font-weight:700;letter-spacing:0.500px;">Data Management</span>
<span class="t" style="left:1390.00px;top:717px;font-size:16px;font-weight:700;letter-spacing:0.861px;">Open</span>
<span class="t" style="left:1480.30px;top:717px;font-size:16px;font-weight:700;letter-spacing:0.572px;">Sep 19, 2024 04:07 PM</span>
<span class="t" style="left:1697.70px;top:717px;font-size:16px;font-weight:700;letter-spacing:0.637px;">Sep 19, 2024 04:05 PM</span>
<span class="t" style="left:292.90px;top:778px;font-size:16px;letter-spacing:-0.398px;">25</span>
<span class="t" style="left:393.00px;top:777px;font-size:16px;letter-spacing:0.267px;">Issue while sending reminders for Asset Lease</span>
<span class="t" style="left:393.00px;top:804px;font-size:16px;letter-spacing:0.482px;">Renewal and notice periods.</span>
<span class="t" style="left:783.30px;top:777px;font-size:16px;letter-spacing:0.215px;">Henry James</span>
<span class="t" style="left:984.30px;top:777px;font-size:16px;letter-spacing:0.091px;">Bella Mark</span>
<span class="t" style="left:1151.70px;top:777px;font-size:16px;letter-spacing:0.580px;">Software</span>
<span class="t" style="left:1390.00px;top:777px;font-size:16px;letter-spacing:1.019px;">Open</span>
<span class="t" style="left:1480.30px;top:777px;font-size:16px;letter-spacing:0.237px;">Sep 4, 2024 05:10 PM</span>
<span class="t" style="left:1697.70px;top:777px;font-size:16px;letter-spacing:0.269px;">Sep 4, 2024 04:10 PM</span>
<span class="t" style="left:292.90px;top:864px;font-size:16px;letter-spacing:0.502px;">24</span>
<span class="t" style="left:393.00px;top:863px;font-size:16px;letter-spacing:0.344px;">Unable to categorise asset in lease tracking tool</span>
<span class="t" style="left:807.70px;top:863px;font-size:16px;letter-spacing:0.234px;">Wade Williams</span>
<span class="t" style="left:984.30px;top:863px;font-size:16px;letter-spacing:0.091px;">Bella Mark</span>
<span class="t" style="left:1151.70px;top:863px;font-size:16px;letter-spacing:0.580px;">Software</span>
<span class="t" style="left:1385.00px;top:863px;font-size:16px;letter-spacing:1.153px;">Open</span>
<span class="t" style="left:1480.30px;top:863px;font-size:16px;letter-spacing:0.095px;">Sep 19, 2024 06:10 PM</span>
<span class="t" style="left:1697.70px;top:863px;font-size:16px;letter-spacing:0.269px;">Sep 4, 2024 04:10 PM</span>
<span class="t" style="left:1780.60px;top:7px;font-size:11.5px;font-weight:700;color:#fff;">2</span>
<span class="t" style="left:1718.30px;top:140px;font-size:14px;font-weight:700;letter-spacing:1.410px;">...</span>
<span class="t" style="left:1781.50px;top:1028px;font-size:17px;color:#22262e;letter-spacing:-0.231px;">Zia</span>
</body></html>
